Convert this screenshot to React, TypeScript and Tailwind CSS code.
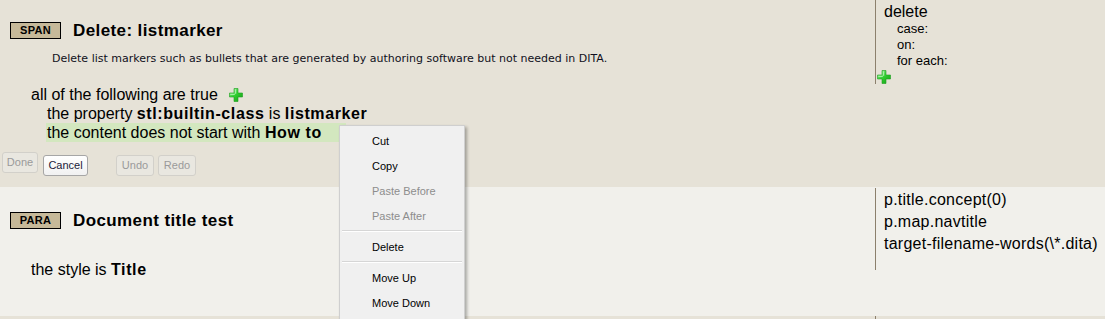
import React from "react";

const font = { fontFamily: '"Liberation Sans", Arial, sans-serif' };

function PlusIcon({ className = "" }: { className?: string }) {
  return (
    <svg width="14" height="14" viewBox="0 0 14 14" className={className}>
      <defs>
        <linearGradient id="pg" x1="0" y1="0" x2="1" y2="1">
          <stop offset="0" stopColor="#8ef08e" />
          <stop offset="0.5" stopColor="#2ecc2e" />
          <stop offset="1" stopColor="#169a16" />
        </linearGradient>
      </defs>
      <path d="M5 0.5h4v4.5h4.5v4h-4.5v4.5h-4v-4.5h-4.5v-4h4.5z" fill="url(#pg)" stroke="#1f9f1f" strokeWidth="0.6" />
      <path d="M5.8 1.3h1.4v4.5h-1.4zM1.3 5.8h4.5v1.2h-4.5z" fill="#b8f7b8" opacity="0.8" />
    </svg>
  );
}

function Badge({ label }: { label: string }) {
  return (
    <span className="inline-flex items-center justify-center h-[17px] w-[51px] border border-black bg-[#c6b999] text-[11px] font-bold text-black leading-none tracking-[0.3px]">
      {label}
    </span>
  );
}

function Btn({ label, disabled, w }: { label: string; disabled?: boolean; w: string }) {
  return (
    <button
      className={`${w} h-[21px] rounded-[3px] border text-[11px] leading-none ${
        disabled
          ? "border-[#d2d0ca] bg-[#e9e7e0] text-[#9a9a9a]"
          : "border-[#a6a6a6] bg-gradient-to-b from-white to-[#f1f1f1] text-[#1b1b3a]"
      }`}
    >
      {label}
    </button>
  );
}

const menuItems: (string | { label: string; disabled: boolean })[] = [
  "Cut",
  "Copy",
  { label: "Paste Before", disabled: true },
  { label: "Paste After", disabled: true },
  "-",
  "Delete",
  "-",
  "Move Up",
  "Move Down",
];

function ContextMenu() {
  return (
    <div className="absolute left-[339px] top-[125px] w-[126px] h-[196px] bg-[#f0f0f0] border border-[#cfcfcf] shadow-[2px_2px_3px_rgba(0,0,0,0.3)] pt-[3px]">
      {menuItems.map((it, i) => {
        if (it === "-") {
          return (
            <div key={i} className="h-[6px] px-[2px] pt-[1px]">
              <div className="border-t border-[#d6d6d6] border-b border-b-white" />
            </div>
          );
        }
        const label = typeof it === "string" ? it : it.label;
        const disabled = typeof it !== "string" && it.disabled;
        return (
          <div
            key={i}
            className={`h-[25px] flex items-center pl-[32px] text-[11px] ${disabled ? "text-[#8d8d8d]" : "text-black"}`}
          >
            {label}
          </div>
        );
      })}
    </div>
  );
}

export default function App() {
  return (
    <div className="relative w-[1105px] h-[319px] overflow-hidden bg-[#e6e2d7] text-black" style={font}>
      {/* SPAN rule */}
      <div className="flex h-[187px] bg-[#e6e2d7]">
        <div className="w-[875px] pl-[10px] pt-[22px]">
          <div className="flex items-center h-[17px]">
            <Badge label="SPAN" />
            <span className="ml-[12px] text-[17px] font-bold tracking-[0.4px]">Delete: listmarker</span>
          </div>
          <div className="mt-[13px] pl-[42px] text-[11px] leading-[14px] text-[#101020] font-['DejaVu_Sans']">
            Delete list markers such as bullets that are generated by authoring software but not needed in DITA.
          </div>
          <div className="mt-[19px] pl-[21px] text-[16px] leading-[19px]">
            <div className="flex items-center">
              <span>all of the following are true</span>
              <PlusIcon className="ml-[11px]" />
            </div>
            <div className="pl-[16px]">
              the property <b className="tracking-[0.6px]">stl:builtin-class</b> is{" "}
              <b className="tracking-[0.6px]">listmarker</b>
            </div>
            <div className="ml-[15px] pl-[1px] w-[300px] bg-[#d3e7bf]">
              the content does not start with <b className="tracking-[0.6px]">How to</b>
            </div>
          </div>
          <div className="mt-[10px] -ml-[8px] flex">
            <Btn label="Done" disabled w="w-[36px]" />
            <span className="ml-[5px]">
              <Btn label="Cancel" w="w-[45px]" />
            </span>
            <span className="ml-[28px]">
              <Btn label="Undo" disabled w="w-[38px]" />
            </span>
            <span className="ml-[4px]">
              <Btn label="Redo" disabled w="w-[38px]" />
            </span>
          </div>
        </div>
        <div className="self-start h-[84px] border-l border-[#8c806c] pl-[8px] pt-[2px] w-[230px]">
          <div className="text-[16px] leading-[19px]">delete</div>
          <div className="pl-[13px] text-[13px] leading-[16px]">
            <div>case:</div>
            <div>on:</div>
            <div>for each:</div>
          </div>
          <PlusIcon className="-ml-[7px] mt-[1px]" />
        </div>
      </div>

      {/* PARA rule */}
      <div className="flex h-[129px] bg-[#f1f0eb]">
        <div className="w-[875px] pl-[10px] pt-[25px]">
          <div className="flex items-center h-[17px]">
            <Badge label="PARA" />
            <span className="ml-[12px] text-[17px] font-bold tracking-[0.4px]">Document title test</span>
          </div>
          <div className="mt-[31px] pl-[21px] text-[16px] leading-[19px]">
            the style is <b className="tracking-[0.6px]">Title</b>
          </div>
        </div>
        <div className="self-start mt-[1px] h-[82px] border-l border-[#8c806c] pl-[8px] pt-[1px] text-[16px] leading-[22px] tracking-[0.25px]">
          <div>p.title.concept(0)</div>
          <div>p.map.navtitle</div>
          <div>target-filename-words(\*.dita)</div>
        </div>
      </div>

      {/* next rule (cut off) */}
      <div className="flex h-[3px] bg-[#e6e2d7]">
        <div className="w-[875px]" />
        <div className="h-full border-l border-[#8c806c]" />
      </div>

      <ContextMenu />
    </div>
  );
}
